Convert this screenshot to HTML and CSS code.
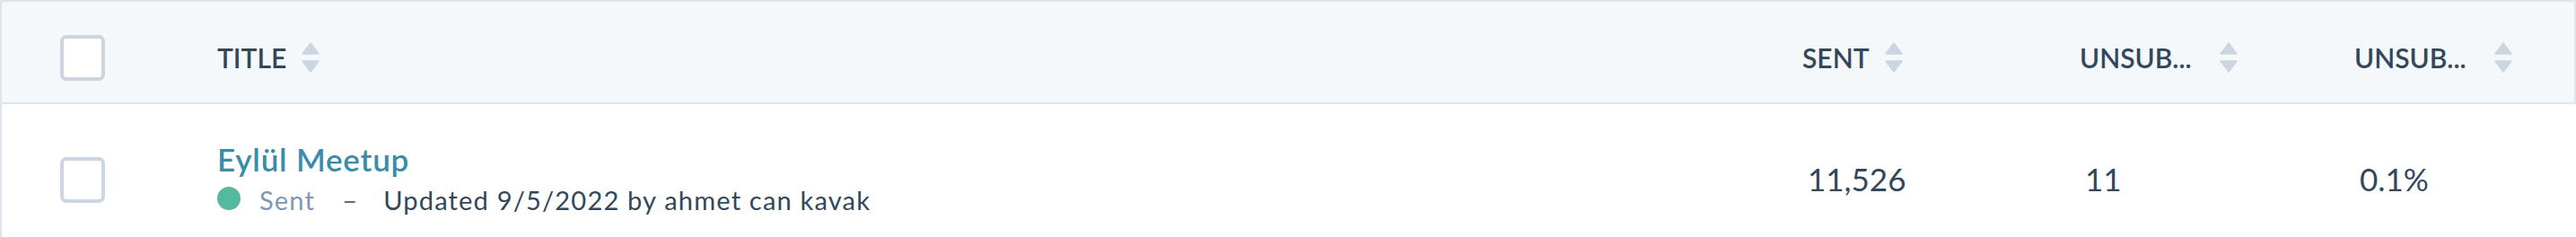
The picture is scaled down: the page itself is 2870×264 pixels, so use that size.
FILE: index.html
```html
<!DOCTYPE html>
<html lang="en">
<head>
<meta charset="UTF-8">
<title>Email list</title>
<link rel="stylesheet" href="styles.css">
</head>
<body>

<div class="table">
  <!-- header row -->
  <div class="row head">
    <div class="cell check-cell"><span class="checkbox"></span></div>
    <div class="cell">
      <span class="label">Title</span>
      <svg class="sort" viewBox="0 0 20 34" width="20" height="34"><path d="M10 1 L19 13 L1 13 Z"/><path d="M1 21 L19 21 L10 33 Z"/></svg>
    </div>
    <div class="cell">
      <span class="label">Sent</span>
      <svg class="sort" viewBox="0 0 20 34" width="20" height="34"><path d="M10 1 L19 13 L1 13 Z"/><path d="M1 21 L19 21 L10 33 Z"/></svg>
    </div>
    <div class="cell">
      <span class="label wide" title="Unsubscribed">UNSUB...</span>
      <svg class="sort" viewBox="0 0 20 34" width="20" height="34"><path d="M10 1 L19 13 L1 13 Z"/><path d="M1 21 L19 21 L10 33 Z"/></svg>
    </div>
    <div class="cell">
      <span class="label wide" title="Unsubscribed rate">UNSUB...</span>
      <svg class="sort" viewBox="0 0 20 34" width="20" height="34"><path d="M10 1 L19 13 L1 13 Z"/><path d="M1 21 L19 21 L10 33 Z"/></svg>
    </div>
  </div>

  <!-- email row -->
  <div class="row item">
    <div class="cell check-cell"><span class="checkbox"></span></div>
    <div class="cell title-cell">
      <a class="email-name" href="#">Eylül Meetup</a>
      <div class="meta">
        <span class="dot"></span>
        <span class="status">Sent</span>
        <span class="dash">–</span>
        <span>Updated 9/5/2022 by ahmet can kavak</span>
      </div>
    </div>
    <div class="cell num">11,526</div>
    <div class="cell num">11</div>
    <div class="cell num">0.1%</div>
  </div>
</div>

</body>
</html>
```

FILE: styles.css
```css
html, body {
  margin: 0;
  height: 100%;
  overflow: hidden;
  background: #fff;
  font-family: Lato, "Open Sans", sans-serif;
  color: #33475b;
}
.table {
  border-left: 2px solid #dfe3eb;
  min-height: 100%;
}
.row {
  display: grid;
  grid-template-columns: 240px 1766px 309px 306px 1fr;
}
.cell {
  display: flex;
  align-items: center;
  min-width: 0;
}
.head {
  box-sizing: border-box;
  height: 116px;
  padding-top: 12px;
  background-color: #f5f8fa;
  border-top: 2px solid #dfe3eb;
  border-bottom: 2px solid #dfe3eb;
  border-right: 2px solid #dfe3eb;
  align-items: center;
}
.label {
  font-size: 30px;
  font-weight: 600;
  text-transform: uppercase;
  white-space: nowrap;
}
.sort {
  margin-left: 17px;
  fill: #cbd6e2;
  stroke: #cbd6e2;
  stroke-width: 1.5;
  stroke-linejoin: round;
}
.label.wide + .sort {
  margin-left: 31px;
}
.check-cell {
  padding-left: 65px;
}
.checkbox {
  display: block;
  box-sizing: border-box;
  width: 50px;
  height: 51px;
  border: 4px solid #cbd6e2;
  border-radius: 7px;
  background: #fff;
}
.item {
  height: 168px;
  align-items: start;
}
.item .check-cell {
  padding-top: 59px;
}
.title-cell {
  display: block;
  padding-top: 40px;
}
.email-name {
  display: block;
  font-size: 35px;
  font-weight: 600;
  line-height: 42px;
  letter-spacing: 0.8px;
  color: #3a8da8;
  text-decoration: none;
}
.meta {
  display: flex;
  align-items: center;
  margin-top: 8px;
  font-size: 29px;
  line-height: 34px;
  letter-spacing: 1.2px;
  white-space: nowrap;
}
.dot {
  width: 26px;
  height: 26px;
  border-radius: 50%;
  background-color: #55b9a0;
  margin: 0 21px 5px 0;
}
.status {
  color: #7c98b6;
}
.dash {
  color: #516f90;
  margin: 0 28px 0 30px;
}
.num {
  padding-top: 62px;
  padding-left: 6px;
  font-size: 35px;
}
```
